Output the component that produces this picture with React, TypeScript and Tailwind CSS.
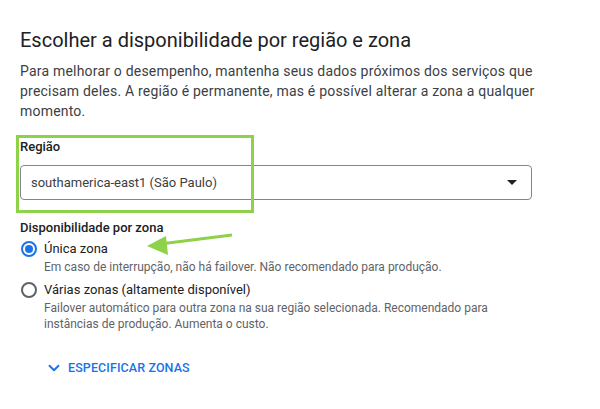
import { ChevronDown } from 'lucide-react';

const font = { fontFamily: 'Roboto, "Liberation Sans", sans-serif' };

const Radio = ({ checked }: { checked: boolean }) => (
  <span
    className={`mt-[1px] flex h-[16px] w-[16px] shrink-0 items-center justify-center rounded-full border-2 ${
      checked ? 'border-[#1a73e8]' : 'border-[#5f6368]'
    }`}
  >
    {checked && <span className="h-[8px] w-[8px] rounded-full bg-[#1a73e8]" />}
  </span>
);

const App = () => {
  return (
    <div className="relative h-[409px] w-[600px] overflow-hidden bg-white" style={font}>
      <div className="px-5 pt-[26px]">
        <h1 className="text-[20px] leading-[28px] text-[#202124]">
          Escolher a disponibilidade por região e zona
        </h1>
        <p className="mt-[7px] text-[14px] leading-[20px] tracking-[0.2px] text-[#3c4043] whitespace-nowrap">
          Para melhorar o desempenho, mantenha seus dados próximos dos serviços que
          <br />
          precisam deles. A região é permanente, mas é possível alterar a zona a qualquer
          <br />
          momento.
        </p>

        <div className="mt-[16px]">
          <div className="text-[13px] font-medium leading-[20px] text-[#202124]">Região</div>
          <div className="mt-[8px] flex h-[35px] w-[512px] items-center justify-between rounded-[4px] border border-[#80868b] pl-[10px] pr-[14px]">
            <span className="text-[13px] text-[#3c4043]">southamerica-east1 (São Paulo)</span>
            <svg width="10" height="5" viewBox="0 0 10 5">
              <path d="M0 0h10L5 5z" fill="#202124" />
            </svg>
          </div>
        </div>

        <div className="mt-[18px] text-[13px] font-medium leading-[20px] text-[#202124]">
          Disponibilidade por zona
        </div>

        <div className="mt-[2px] flex gap-[7px] pl-[1px]">
          <Radio checked />
          <div>
            <div className="text-[13px] leading-[18px] text-[#202124]">Única zona</div>
            <div className="mt-[1px] text-[12px] leading-[16px] text-[#5f6368]">
              Em caso de interrupção, não há failover. Não recomendado para produção.
            </div>
          </div>
        </div>

        <div className="mt-[6px] flex gap-[7px] pl-[1px]">
          <Radio checked={false} />
          <div>
            <div className="text-[13px] leading-[18px] text-[#202124]">
              Várias zonas (altamente disponível)
            </div>
            <div className="mt-[1px] text-[12px] leading-[16px] text-[#5f6368] whitespace-nowrap">
              Failover automático para outra zona na sua região selecionada. Recomendado para
              <br />
              instâncias de produção. Aumenta o custo.
            </div>
          </div>
        </div>

        <button className="ml-[25px] mt-[27px] flex items-center gap-[5px] text-[12.5px] font-medium tracking-[0.1px] text-[#1a73e8]">
          <ChevronDown size={18} strokeWidth={2.5} />
          ESPECIFICAR ZONAS
        </button>
      </div>

      {/* annotation: green highlight box + arrow */}
      <div className="pointer-events-none absolute left-[16px] top-[135px] h-[78px] w-[238px] border-[3px] border-[#8ed14a]" />
      <svg className="pointer-events-none absolute left-0 top-0" width="600" height="409">
        <line x1="232" y1="235" x2="160" y2="244" stroke="#8ed14a" strokeWidth="3" />
        <path d="M147 246 L166 236 L168 255 Z" fill="#8ed14a" />
      </svg>
    </div>
  );
};

export default App;
